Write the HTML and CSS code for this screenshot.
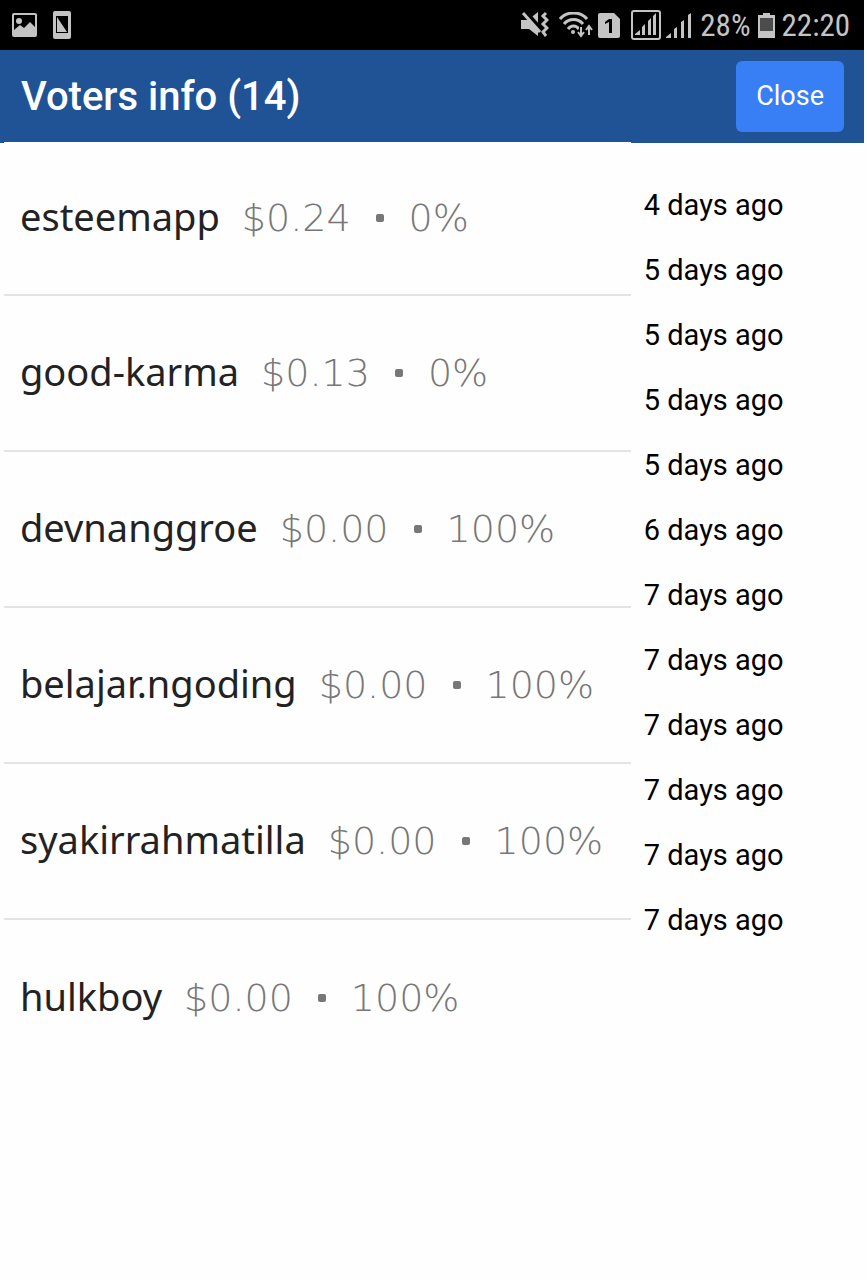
FILE: index.html
```html
<!DOCTYPE html>
<html lang="en">
<head>
  <meta charset="UTF-8" />
  <meta name="viewport" content="width=device-width, initial-scale=1.0"/>
  <title>Voters info</title>
  <link rel="stylesheet" href="styles.css">
</head>
<body>

  <div class="status-bar">
    <div class="status-left">
      <svg width="25" height="24" viewBox="0 0 25 24">
        <path fill-rule="evenodd" d="M2 0h21a2 2 0 0 1 2 2v20a2 2 0 0 1-2 2H2a2 2 0 0 1-2-2V2a2 2 0 0 1 2-2zM2 2v15l6-5 4 3 6-6 5 5V2z"/>
        <circle cx="7" cy="8" r="3"/>
      </svg>
      <svg width="18" height="28" viewBox="0 0 18 28">
        <path fill-rule="evenodd" d="M2 0h14a2 2 0 0 1 2 2v24a2 2 0 0 1-2 2H2a2 2 0 0 1-2-2V2a2 2 0 0 1 2-2zM3 5v17h12V5zM4 6l10 15H4z"/>
      </svg>
    </div>
    <div class="status-right">
      <svg class="mute" width="28" height="28" viewBox="0 0 28 28">
        <path d="M0 9h7l10-8v24l-9-7H0z"/>
        <path class="gap" d="M4 0l16 18"/>
        <path class="line" d="M2 2l17 19"/>
        <path class="line" d="M25 2l-3 3 4 4-4 4 4 4-4 4 3 4"/>
      </svg>
      <svg class="wifi" width="34" height="26" viewBox="0 0 34 26">
        <path class="line" d="M1 7C8-1 21-1 28 7M5 12c5-6 14-6 19 0M9 17c3-4 8-4 11 0"/>
        <path class="gap" d="M22 13v9M30 12v12"/>
        <circle cx="14" cy="20" r="2"/>
        <path class="line thin" d="M22 15v8M19 20l3 4 3-4M30 23v-8M27 18l3-4 3 4"/>
      </svg>
      <svg class="sim" width="22" height="25" viewBox="0 0 22 25">
        <path d="M2 0h14l6 6v17a2 2 0 0 1-2 2H2a2 2 0 0 1-2-2V2a2 2 0 0 1 2-2z"/>
        <path class="digit" d="M7 9l4-3h3v14h-3V9l-4 2z"/>
      </svg>
      <svg class="signal-box" width="30" height="30" viewBox="0 0 30 30">
        <rect class="line" x="1" y="1" width="28" height="28" rx="2"/>
        <path d="M4 25v-1l5-4v5zM11 17l3-3v11h-3zM17 11l3-3v17h-3zM22 6l3-3v22h-3z"/>
      </svg>
      <svg class="signal" width="25" height="25" viewBox="0 0 25 25">
        <path d="M0 25v-1l5-4v5zM8 16l3-2v11H8zM15 9l3-2v18h-3zM22 2l3-2v25h-3z"/>
      </svg>
      <span class="percent">28%</span>
      <svg class="battery" width="17" height="25" viewBox="0 0 17 25">
        <path d="M5 0h7v2h5v23H0V2h5z"/>
        <path class="empty" d="M2 5h13v13H2z"/>
      </svg>
      <span>22:20</span>
    </div>
  </div>

  <header class="header">
    <h1>Voters info (14)</h1>
    <button type="button" class="close-btn">Close</button>
  </header>

  <main class="content">
    <ul class="voters">
      <li><span class="name">esteemapp</span><span>$0.24</span><span class="dot"></span><span>0%</span></li>
      <li><span class="name">good-karma</span><span>$0.13</span><span class="dot"></span><span>0%</span></li>
      <li><span class="name">devnanggroe</span><span>$0.00</span><span class="dot"></span><span>100%</span></li>
      <li><span class="name">belajar.ngoding</span><span>$0.00</span><span class="dot"></span><span>100%</span></li>
      <li><span class="name">syakirrahmatilla</span><span>$0.00</span><span class="dot"></span><span>100%</span></li>
      <li><span class="name">hulkboy</span><span>$0.00</span><span class="dot"></span><span>100%</span></li>
    </ul>

    <ul class="times">
      <li>4 days ago</li>
      <li>5 days ago</li>
      <li>5 days ago</li>
      <li>5 days ago</li>
      <li>5 days ago</li>
      <li>6 days ago</li>
      <li>7 days ago</li>
      <li>7 days ago</li>
      <li>7 days ago</li>
      <li>7 days ago</li>
      <li>7 days ago</li>
      <li>7 days ago</li>
    </ul>
  </main>

</body>
</html>
```
FILE: styles.css
```css
* {
  box-sizing: border-box;
}

body {
  font-family: Roboto, sans-serif;
  background: #fefefe;
  color: #000;
  margin: 0;
  padding-right: 3px;
}

ul {
  list-style: none;
  margin: 0;
  padding: 0;
}

.status-bar {
  display: flex;
  justify-content: space-between;
  align-items: center;
  height: 50px;
  padding: 0 14px 0 12px;
  background: #000;
  color: #c4c4c4;
  font-family: "Roboto Condensed", "Liberation Sans Narrow", Roboto, sans-serif;
  font-size: 31px;
}

.status-bar svg {
  fill: #c4c4c4;
  flex: none;
}

.status-bar .line {
  fill: none;
  stroke: #c4c4c4;
  stroke-width: 2;
}

.status-bar .mute .line,
.status-bar .wifi .line {
  stroke-width: 3;
}

.status-bar .wifi .thin {
  stroke-width: 2;
}

.status-bar .gap {
  fill: none;
  stroke: #000;
  stroke-width: 4;
}

.status-bar .digit {
  fill: #000;
}

.status-bar .empty {
  fill: #4c4c4c;
}

.status-left,
.status-right {
  display: flex;
  align-items: center;
}

.status-left {
  gap: 16px;
}

.mute {
  margin-right: 10px;
}

.wifi {
  margin-right: 5px;
}

.sim {
  margin-right: 11px;
}

.signal-box {
  margin-right: 5px;
}

.signal {
  margin-right: 9px;
}

.battery {
  margin: 0 7px;
}

.header {
  display: flex;
  justify-content: space-between;
  align-items: center;
  padding: 11px 20px 11px 21px;
  background: #205396;
}

.header h1 {
  margin: 0;
  color: #fff;
  font-size: 40px;
  font-weight: 500;
}

.close-btn {
  padding: 20px;
  border: none;
  border-radius: 6px;
  background: #387ef5;
  color: #fff;
  font-family: inherit;
  font-size: 27px;
  line-height: 31px;
}

.content {
  display: flex;
}

.voters {
  flex: 1;
  margin: -1px 0 0 4px;
  background: #fefefe;
}

.voters li {
  display: flex;
  align-items: center;
  height: 156px;
  padding-left: 16px;
  border-bottom: 2px solid #e4e4e4;
  color: #777;
  font-family: "DejaVu Sans", sans-serif;
  font-size: 38px;
  font-weight: 200;
}

.voters li:first-child {
  height: 154px;
}

.voters li:last-child {
  border-bottom: none;
}

.voters .name {
  margin-right: 22px;
  padding-bottom: 4px;
  color: #222;
  font-family: "Noto Sans", sans-serif;
  font-size: 38px;
  font-weight: 400;
}

.dot {
  width: 8px;
  height: 8px;
  margin: 0 25px;
  border-radius: 2px;
  background: #777;
}

.times {
  flex: 0 0 27%;
  padding: 30px 0 0 13px;
  font-size: 29px;
  line-height: 65px;
}
```
